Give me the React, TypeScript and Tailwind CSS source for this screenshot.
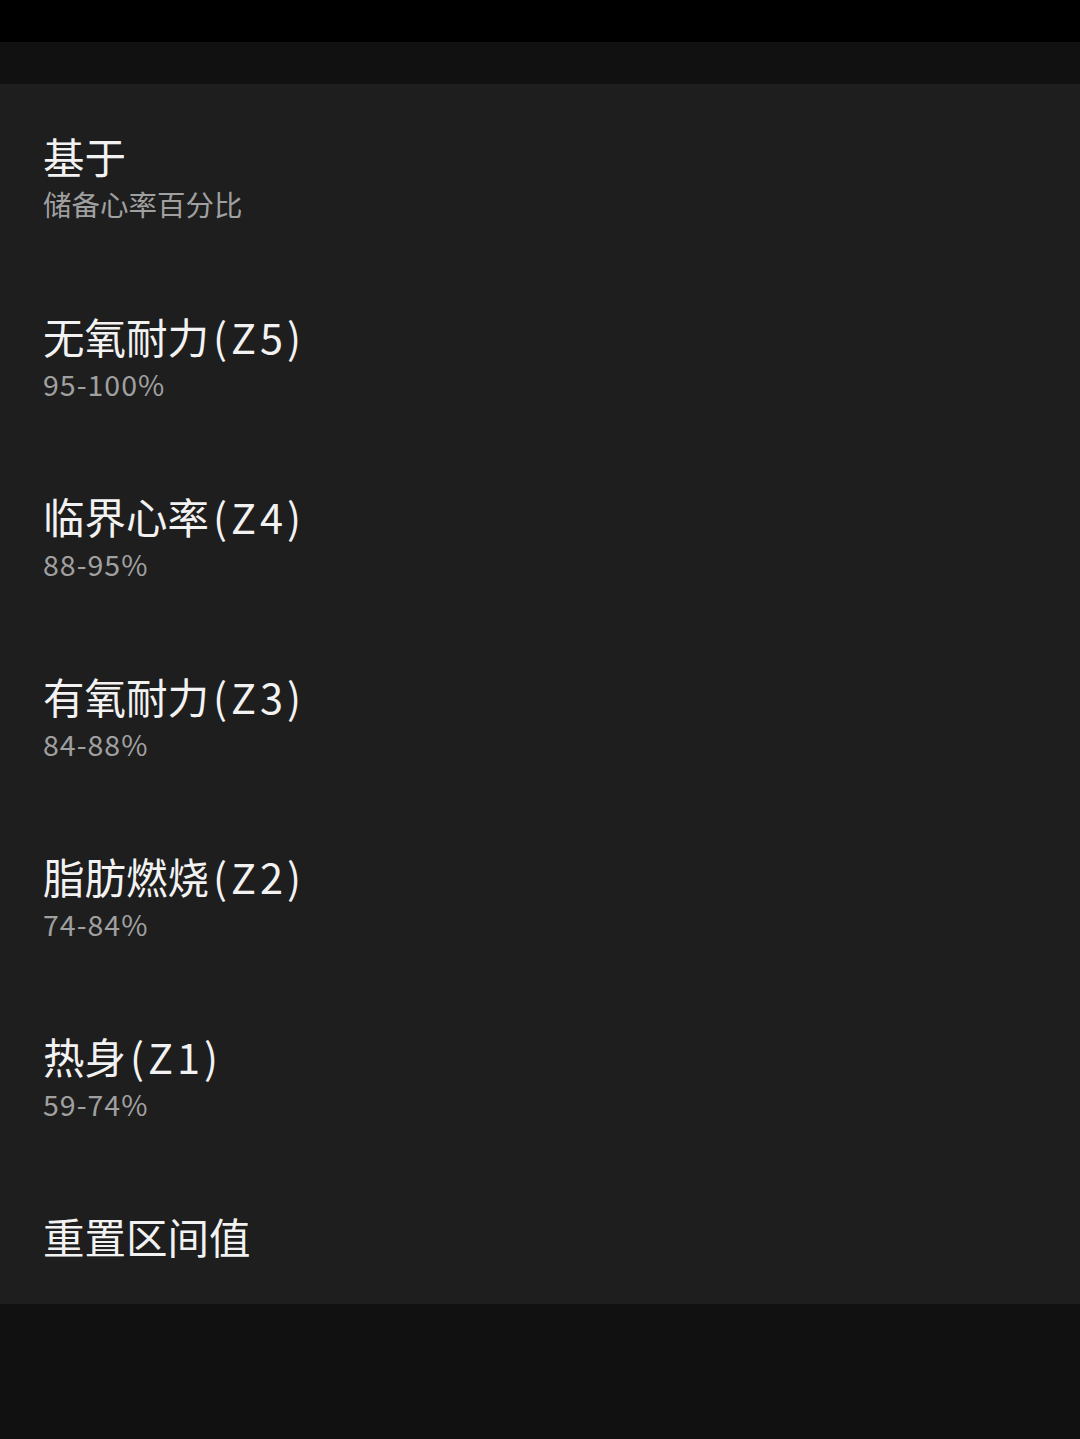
const zones = [
  { name: "基于", code: "", sub: "储备心率百分比" },
  { name: "无氧耐力", code: "(Z5)", sub: "95-100%" },
  { name: "临界心率", code: "(Z4)", sub: "88-95%" },
  { name: "有氧耐力", code: "(Z3)", sub: "84-88%" },
  { name: "脂肪燃烧", code: "(Z2)", sub: "74-84%" },
  { name: "热身", code: "(Z1)", sub: "59-74%" },
];

export default function App() {
  return (
    <div
      className="flex min-h-[1439px] w-[1080px] flex-col bg-[#101010]"
      style={{ fontFamily: '"Noto Sans CJK SC", "Noto Sans", sans-serif' }}
    >
      <div className="h-[42px] bg-black" />
      <div className="h-[42px] bg-[#111111]" />
      <div className="bg-[#1e1e1e]">
        {zones.map((z) => (
          <div key={z.name} className="flex h-[180px] flex-col px-[43px] pt-[48px]">
            <p className="h-[48px] text-[41.5px] leading-[48px] text-[#f2f2f2]">
              {z.name}
              {z.code && <span className="ml-[4px] tracking-[4px]">{z.code}</span>}
            </p>
            <p
              className={
                z.code
                  ? "h-[48px] text-[28.5px] leading-[48px] tracking-[1px] text-[#a0a0a0]"
                  : "h-[48px] text-[28.5px] leading-[48px] text-[#a0a0a0]"
              }
            >
              {z.sub}
            </p>
          </div>
        ))}
        <div className="flex h-[140px] flex-col px-[43px] pt-[48px]">
          <p className="h-[48px] text-[41.5px] leading-[48px] text-[#f2f2f2]">重置区间值</p>
        </div>
      </div>
      <div className="flex-1 bg-[#111111]" />
    </div>
  );
}
